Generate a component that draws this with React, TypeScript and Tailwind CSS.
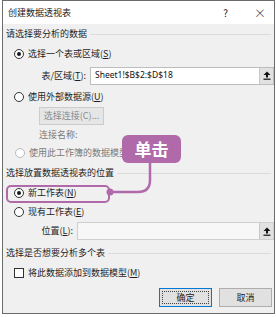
import React from "react";

const font = { fontFamily: '"Noto Sans CJK SC", "Noto Sans", sans-serif' };

function Radio({ checked, disabled }: { checked?: boolean; disabled?: boolean }) {
  return (
    <span
      className={`flex h-[10px] w-[10px] shrink-0 items-center justify-center rounded-full border bg-white ${
        disabled ? "border-[#bcbcbc]" : "border-[#333333]"
      }`}
    >
      {checked && <span className="h-[4px] w-[4px] rounded-full bg-[#1a1a1a]" />}
    </span>
  );
}

function Upload() {
  return (
    <div className="flex h-full w-[14px] items-center justify-center border-l border-[#c8c8c8] bg-[#e1e1e1]">
      <svg width="8" height="9" viewBox="0 0 8 9">
        <path d="M4 0.5 L7.5 4 L5 4 L5 6.5 L3 6.5 L3 4 L0.5 4 Z" fill="#111" />
        <rect x="0.5" y="7.6" width="7" height="1.2" fill="#111" />
      </svg>
    </div>
  );
}

function Heading({ text }: { text: string }) {
  return (
    <div className="flex items-center gap-[3px] pr-[3px]">
      <span className="text-[9px] text-[#1e1e1e] whitespace-nowrap">{text}</span>
      <div className="h-px flex-1 bg-[#dcdcdc]" />
    </div>
  );
}

export default function App() {
  return (
    <div className="relative h-[317px] w-[276px] bg-white" style={font}>
      <div className="ml-[2px] flex h-[314px] w-[273px] flex-col border border-[#6b6b6b]">
        {/* title bar */}
        <div className="flex h-[23px] items-center bg-white pl-[5px] text-[9px] text-[#222]">
          <span>创建数据透视表</span>
          <span className="ml-auto mr-[26px] text-[10px]">?</span>
          <span className="mr-[8px] text-[12px] font-light">×</span>
        </div>
        {/* body */}
        <div className="flex flex-1 flex-col bg-[#f0f0f0] pl-[3px] text-[9px] text-[#1e1e1e]">
          <div className="flex h-[20px] flex-col justify-center">
            <Heading text="请选择要分析的数据" />
          </div>
          <div className="flex h-[20px] items-center gap-[4px] pl-[8px]">
            <Radio checked />
            <span>
              选择一个表或区域(<u>S</u>)
            </span>
          </div>
          <div className="flex h-[23px] items-center">
            <span className="w-[84px] pr-[4px] text-right">
              表/区域(<u>T</u>):
            </span>
            <div className="flex h-[18px] w-[184px] items-center border border-[#bdbdbd] bg-white">
              <span className="flex-1 pl-[4px] text-[8.5px] text-[#111]" style={{ fontFamily: '"Noto Sans", sans-serif' }}>
                Sheet1!$B$2:$D$18
              </span>
              <Upload />
            </div>
          </div>
          <div className="flex h-[20px] items-center gap-[4px] pl-[8px]">
            <Radio />
            <span>
              使用外部数据源(<u>U</u>)
            </span>
          </div>
          <div className="flex h-[18px] pl-[33px]">
            <div className="flex h-[18px] w-[65px] items-center justify-center border border-[#cccccc] bg-[#e6e6e6] text-[#8a8a8a]">
              选择连接(C)...
            </div>
          </div>
          <div className="flex h-[19px] items-center pl-[33px] text-[#7a7a7a]">连接名称:</div>
          <div className="flex h-[18px] items-center gap-[4px] pl-[9px] text-[#7a7a7a]">
            <Radio disabled />
            <span>使用此工作簿的数据模型(D)</span>
          </div>
          <div className="flex h-[22px] flex-col justify-center">
            <Heading text="选择放置数据透视表的位置" />
          </div>
          <div className="flex h-[18px] items-center gap-[4px] pl-[8px]">
            <Radio checked />
            <span>
              新工作表(<u>N</u>)
            </span>
          </div>
          <div className="flex h-[20px] items-center gap-[4px] pl-[8px]">
            <Radio />
            <span>
              现有工作表(<u>E</u>)
            </span>
          </div>
          <div className="flex h-[18px] items-center">
            <span className="w-[71px] pr-[4px] text-right">
              位置(<u>L</u>):
            </span>
            <div className="flex h-[18px] w-[197px] items-center border border-[#cfcfcf] bg-[#f7f7f7]">
              <span className="flex-1" />
              <Upload />
            </div>
          </div>
          <div className="flex h-[26px] flex-col justify-center">
            <Heading text="选择是否想要分析多个表" />
          </div>
          <div className="flex h-[14px] items-center gap-[4px] pl-[8px]">
            <span className="h-[10px] w-[10px] border border-[#333] bg-white" />
            <span>
              将此数据添加到数据模型(<u>M</u>)
            </span>
          </div>
          <div className="mt-[8px] flex h-[19px] justify-end gap-[7px] pr-[2px]">
            <div className="flex h-[19px] w-[53px] items-center justify-center border border-[#0078d7] bg-[#e1e1e1] p-[2px]">
              <div className="flex h-full w-full items-center justify-center border border-dotted border-[#444]">确定</div>
            </div>
            <div className="flex h-[19px] w-[53px] items-center justify-center border border-[#adadad] bg-[#e1e1e1]">取消</div>
          </div>
        </div>
      </div>

      {/* highlight */}
      <div className="absolute left-[6px] top-[185px] h-[18px] w-[104px] rounded-[5px] border-2 border-[#b06aaa]" />
      {/* connector */}
      <svg className="absolute left-0 top-0" width="276" height="317">
        <path d="M150 162 L150 180 Q150 192 138 192 L110 192" fill="none" stroke="#b06aaa" strokeWidth="2.5" />
        <circle cx="110" cy="192" r="3.5" fill="#b06aaa" />
      </svg>
      {/* callout */}
      <div className="absolute left-[122px] top-[135px] flex h-[28px] w-[59px] items-center justify-center rounded-[6px] bg-[#b06aaa] text-[17px] font-bold text-white">
        单击
      </div>
    </div>
  );
}
